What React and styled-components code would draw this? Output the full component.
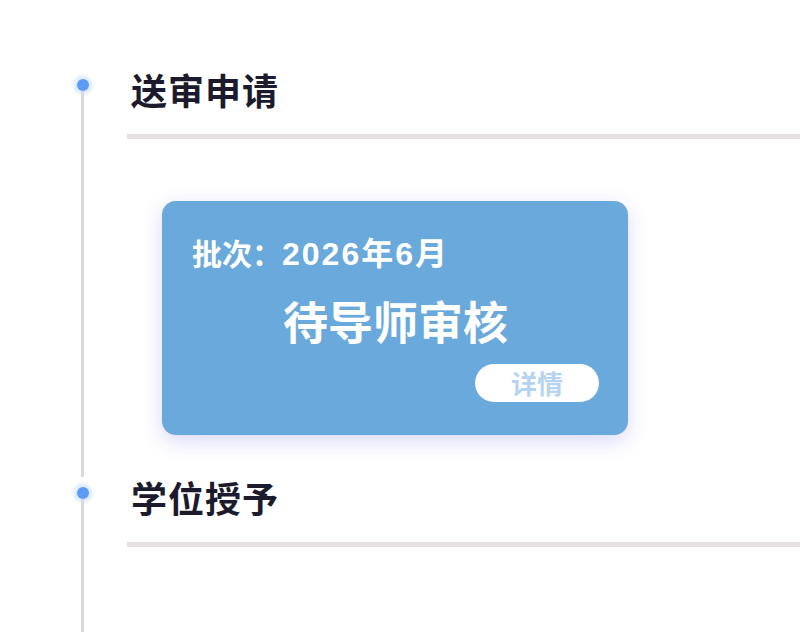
import React from 'react'
import styled, { createGlobalStyle } from 'styled-components'

const GlobalStyle = createGlobalStyle`
    html, body {
        margin: 0;
        padding: 0;
        background: #ffffff;
    }
    body {
        font-family: "Noto Sans CJK SC", "Noto Sans", sans-serif;
    }
`;

const Page = styled.div`
    width: 800px;
    height: 632px;
    overflow: hidden;
    padding-top: 69px;
    box-sizing: border-box;
`;

const Step = styled.div`
    display: grid;
    grid-template-columns: 42px 1fr;
    column-gap: 23px;
    padding-left: 62px;
`;

const Rail = styled.div`
    display: flex;
    flex-direction: column;
    align-items: center;
    padding-top: 10px;
`;

const Dot = styled.span`
    width: 12px;
    height: 12px;
    border-radius: 50%;
    background: #5b9bf6;
    box-shadow: 0 0 3px 4px rgba(91, 155, 246, 0.18);
    flex-shrink: 0;
    margin-left: -1px;
`;

const Line = styled.span`
    flex: 1;
    width: 3px;
    margin-left: -1px;
    background: #d9d9d9;
`;

const Body = styled.div`
    display: flex;
    flex-direction: column;
    padding-bottom: ${({ $last }) => ($last ? '120px' : '42px')};
`;

const Title = styled.h2`
    margin: 0 0 0 4px;
    font-size: 36px;
    line-height: 40px;
    letter-spacing: 1px;
    font-weight: 700;
    color: #1b1b2d;
`;

const Divider = styled.div`
    height: 5px;
    margin-top: 25px;
    background: #e6e1e1;
`;

const Card = styled.div`
    width: 466px;
    height: 234px;
    margin: 62px 0 0 35px;
    box-sizing: border-box;
    padding: 36px 29px 32px 30px;
    border-radius: 14px;
    background: #69a9db;
    box-shadow: 0 6px 20px rgba(118, 118, 232, 0.28);
    display: flex;
    flex-direction: column;
    color: #ffffff;
`;

const Batch = styled.div`
    font-family: "Liberation Sans", "Noto Sans CJK SC", sans-serif;
    font-size: 30px;
    line-height: 35px;
    font-weight: 700;
`;

const BatchValue = styled.span`
    font-size: 32px;
    letter-spacing: 2px;
`;

const Status = styled.div`
    margin-top: 23px;
    font-size: 45px;
    line-height: 52px;
    font-weight: 700;
    text-align: center;
`;

const DetailButton = styled.button`
    align-self: flex-end;
    margin-top: 17px;
    width: 124px;
    height: 38px;
    border: none;
    border-radius: 19px;
    background: #ffffff;
    color: #b4d4ef;
    font-family: inherit;
    font-size: 26px;
    font-weight: 700;
    line-height: 38px;
    padding: 0;
    cursor: pointer;
`;

function App() {
    return (
        <React.Fragment>
            <GlobalStyle />
            <Page>
                <Step>
                    <Rail>
                        <Dot />
                        <Line />
                    </Rail>
                    <Body>
                        <Title>送审申请</Title>
                        <Divider />
                        <Card>
                            <Batch>批次：<BatchValue>2026年6月</BatchValue></Batch>
                            <Status>待导师审核</Status>
                            <DetailButton>详情</DetailButton>
                        </Card>
                    </Body>
                </Step>
                <Step>
                    <Rail>
                        <Dot />
                        <Line />
                    </Rail>
                    <Body $last>
                        <Title>学位授予</Title>
                        <Divider />
                    </Body>
                </Step>
            </Page>
        </React.Fragment>
    )
}

export default App
